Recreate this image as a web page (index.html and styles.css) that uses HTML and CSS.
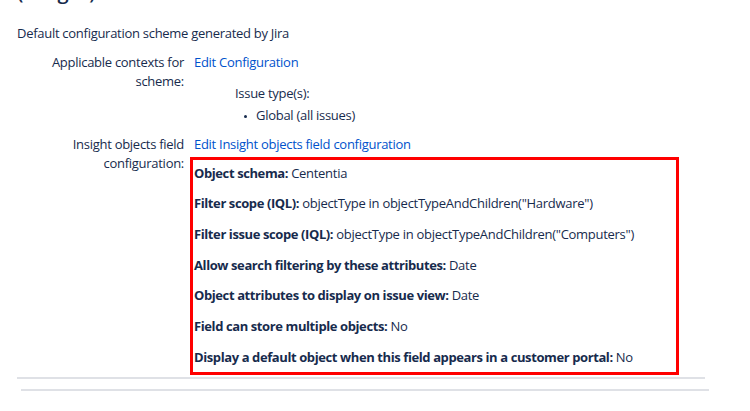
FILE: index.html
```html
<!DOCTYPE html>
<html>
<head>
<meta charset="utf-8">
<link rel="stylesheet" href="styles.css">
</head>
<body>
<div class="page">
  <h2 class="title">(Insight)</h2>
  <p class="desc">Default configuration scheme generated by Jira</p>
  <div class="field">
    <div class="label">Applicable contexts for scheme:</div>
    <div class="value">
      <a class="link" href="#">Edit Configuration</a>
      <div class="issue-types">
        <div class="it-title">Issue type(s):</div>
        <ul class="it-list"><li>Global (all issues)</li></ul>
      </div>
    </div>
  </div>
  <div class="field field-insight">
    <div class="label">Insight objects field configuration:</div>
    <div class="value">
      <a class="link" href="#">Edit Insight objects field configuration</a>
      <div class="box">
        <p><b>Object schema:</b> Cententia</p>
        <p><b>Filter scope (IQL):</b> objectType in objectTypeAndChildren("Hardware")</p>
        <p><b>Filter issue scope (IQL):</b> objectType in objectTypeAndChildren("Computers")</p>
        <p><b>Allow search filtering by these attributes:</b> Date</p>
        <p><b>Object attributes to display on issue view:</b> Date</p>
        <p><b>Field can store multiple objects:</b> No</p>
        <p><b>Display a default object when this field appears in a customer portal:</b> No</p>
      </div>
    </div>
  </div>
  <div class="rule rule-1"></div>
  <div class="rule rule-2"></div>
</div>
</body>
</html>
```
FILE: styles.css
```css
html, body {
  margin: 0;
  padding: 0;
  background: #fff;
}
body {
  font-family: "Open Sans", "Liberation Sans", sans-serif;
  font-size: 13px;
  letter-spacing: -0.28px;
  color: #172b4d;
  overflow: hidden;
}
.page {
  padding-left: 17px;
  width: 692px;
}
.title {
  margin: -20px 0 0 0;
  font-size: 20px;
  line-height: 24px;
  font-weight: 600;
  letter-spacing: 0;
}
.desc {
  margin: 19.5px 0 0 0;
  line-height: 19px;
}
.field {
  display: grid;
  grid-template-columns: 167px 1fr;
  column-gap: 10px;
  margin-top: 10px;
  line-height: 19px;
}
.field-insight {
  margin-top: 10px;
}
.label {
  text-align: right;
  color: #172b4d;
}
.value {
  min-width: 0;
}
.link {
  color: #0052cc;
  text-decoration: none;
}
.issue-types {
  margin: 12px 0 0 41px;
}
.it-title {
  line-height: 19px;
}
.it-list {
  margin: 3px 0 0 0;
  padding: 0 0 0 21px;
  list-style: none;
}
.it-list li {
  position: relative;
}
.it-list li::before {
  content: "";
  position: absolute;
  left: -12px;
  top: 9px;
  width: 3px;
  height: 3px;
  border-radius: 50%;
  background: #172b4d;
}
.box {
  margin: 3px 0 0 -4px;
  width: 482px;
  border: 3px solid #ff0000;
  padding: 3px 0 5px 1px;
}
.box p {
  margin: 10.7px 0 0 0;
  line-height: 20px;
  white-space: nowrap;
}
.box p:first-child {
  margin-top: 0;
}
.box b {
  font-weight: 700;
  letter-spacing: -0.4px;
}
.rule {
  height: 2px;
  background: #dfe1e6;
  width: 688px;
}
.rule-1 {
  margin-top: 2px;
}
.rule-2 {
  margin: 10px 0 0 4px;
}
```
